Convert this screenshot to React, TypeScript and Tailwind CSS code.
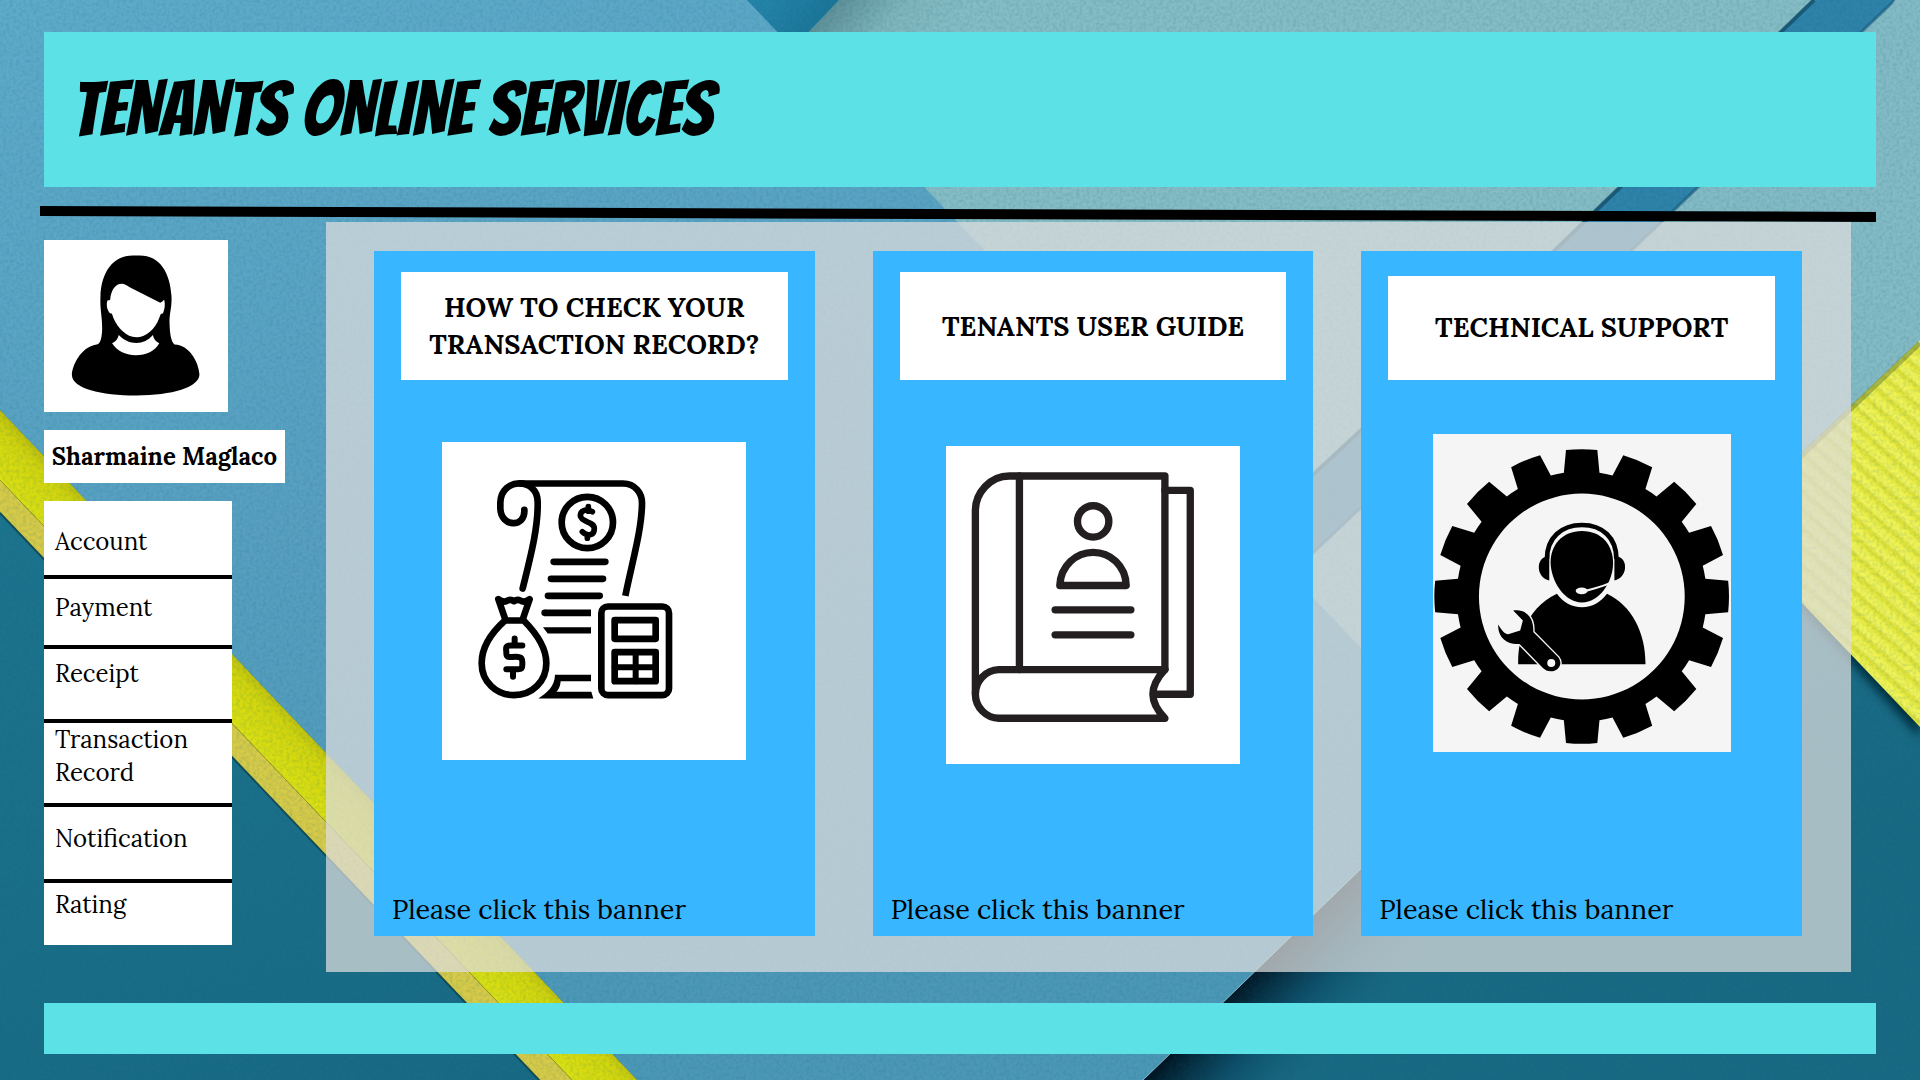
import React from "react";

const serif = "font-['Lora','Liberation_Serif',serif]";

function Backdrop() {
  return (
    <svg
      className="absolute inset-0 h-full w-full"
      viewBox="0 0 1920 1080"
      preserveAspectRatio="none"
      aria-hidden="true"
    >
      <defs>
        <linearGradient id="paper" x1="0" y1="0" x2="0.3" y2="1">
          <stop offset="0" stopColor="#5eaac9" />
          <stop offset="0.5" stopColor="#589fc0" />
          <stop offset="1" stopColor="#4c97b6" />
        </linearGradient>
        <linearGradient id="teal" x1="0" y1="0" x2="0.4" y2="1">
          <stop offset="0" stopColor="#207b94" />
          <stop offset="1" stopColor="#196983" />
        </linearGradient>
        <linearGradient id="yellow" gradientUnits="userSpaceOnUse" x1="200" y1="692" x2="249" y2="645">
          <stop offset="0" stopColor="#dbe013" />
          <stop offset="0.55" stopColor="#d2d50c" />
          <stop offset="1" stopColor="#a8a410" />
        </linearGradient>
        <linearGradient id="shade" gradientUnits="userSpaceOnUse" x1="1180" y1="1043" x2="1270" y2="1130">
          <stop offset="0" stopColor="#01121f" />
          <stop offset="0.45" stopColor="#0b4660" stopOpacity="0.75" />
          <stop offset="1" stopColor="#1b6b84" stopOpacity="0" />
        </linearGradient>
        <linearGradient id="wedge" gradientUnits="userSpaceOnUse" x1="770" y1="0" x2="850" y2="60">
          <stop offset="0" stopColor="#2583a8" />
          <stop offset="1" stopColor="#12698c" />
        </linearGradient>
        <linearGradient id="mist" gradientUnits="userSpaceOnUse" x1="824" y1="16" x2="900" y2="86">
          <stop offset="0" stopColor="#5f9098" />
          <stop offset="0.5" stopColor="#7fb4bb" />
          <stop offset="1" stopColor="#86bcc4" />
        </linearGradient>
        <linearGradient id="ridge" x1="0" y1="0" x2="0" y2="1">
          <stop offset="0" stopColor="#dcdf33" />
          <stop offset="0.35" stopColor="#eff24c" />
          <stop offset="0.75" stopColor="#f0f35c" />
          <stop offset="1" stopColor="#dcdf33" />
        </linearGradient>
        <pattern id="ridges" width="14" height="14" patternUnits="userSpaceOnUse" patternTransform="rotate(41)">
          <rect width="14" height="14" fill="url(#ridge)" />
        </pattern>
        <filter id="soft" x="-10%" y="-10%" width="120%" height="120%">
          <feGaussianBlur stdDeviation="5" />
        </filter>
        <filter id="grain" x="0" y="0" width="100%" height="100%">
          <feTurbulence type="fractalNoise" baseFrequency="0.3" numOctaves="2" seed="4" />
          <feColorMatrix values="0 0 0 0 0  0 0 0 0 0.12  0 0 0 0 0.2  0.9 0 0 0 -0.34" />
        </filter>
      </defs>
      <rect width="1920" height="1080" fill="url(#teal)" />
      <polygon points="1480,750 1920,750 1920,1080 1143,1080" fill="url(#shade)" />
      <polygon points="747,0 1895,0 1300,620" fill="#2f82a9" />
      <polygon points="747,0 839,0 793,48" fill="url(#wedge)" />
      <polygon points="839,0 1812,0 1552,251 1200,578 780,62" fill="url(#mist)" />
      <polyline points="1814,0 1554,251 1235,547" fill="none" stroke="#0e3e55" strokeWidth="4" opacity="0.6" />
      <polygon points="1895,0 1920,0 1920,340 1500,740 1250,613" fill="#84bac4" />
      <polyline points="1895,0 1250,613" fill="none" stroke="#17577a" strokeWidth="3" opacity="0.6" />
      <polygon points="1920,350 1733,524 1733,534 1920,738" fill="#062f3d" filter="url(#soft)" />
      <polygon points="1895,0 1920,0 1920,340 1680,568 1500,640" fill="#84bac4" />
      <polygon points="1920,340 1727,524 1920,727" fill="url(#ridges)" />
      <polyline points="1920,343 1727,527" fill="none" stroke="#6e7d2c" strokeWidth="5" opacity="0.5" />
      <polygon points="0,0 747,0 1470,763 1143,1080 637,1080 0,410" fill="url(#paper)" />
      <polyline points="1470,763 1143,1080" fill="none" stroke="#8dbfd2" strokeWidth="1" />
      <polygon points="0,410 637,1080 572,1080 0,480" fill="url(#yellow)" />
      <polygon points="0,480 572,1080 540,1080 0,512" fill="#d6ca48" />
      <polyline points="0,480 572,1080" fill="none" stroke="#9d9a1c" strokeWidth="1" />
      <polyline points="0,513 540,1081" fill="none" stroke="#0c3c40" strokeWidth="2" opacity="0.7" />
      <rect width="1920" height="1080" filter="url(#grain)" opacity="0.35" />
    </svg>
  );
}

function WomanIcon() {
  return (
    <svg className="h-full w-full" viewBox="40 120 554 516" aria-hidden="true">
      <path
        d="M318 166C250 160 212 214 210 290C208 330 216 350 215 392C213 420 209 431 198 434C150 441 124 500 124 526C126 566 210 587 318 587C426 587 508 562 508 524C506 490 480 436 433 434C424 425 419 408 418 370C417 340 425 325 424 290C420 214 386 160 318 166Z"
        fill="#000"
      />
      <path
        d="M239 300C242 268 256 250 276 251C284 252 290 257 298 261L390 308C396 307 399 300 402 300C406 316 402 332 398 340C390 340 390 346 387 354C374 390 346 412 318 412C288 412 262 384 249 354C246 344 244 338 239 340C229 330 227 312 231 301Z"
        fill="#fff"
      />
      <path
        d="M265 405C283 422 298 429 318 429C338 429 354 421 368 405C370 417 376 424 387 430C374 454 348 466 316 466C284 466 259 452 245 430C256 425 263 416 265 405Z"
        fill="#fff"
      />
    </svg>
  );
}

function RecordIcon() {
  return (
    <svg className="h-full w-full" viewBox="5 6 912 951" fill="none" stroke="#000" strokeWidth="20" strokeLinecap="round" strokeLinejoin="round" aria-hidden="true">
      <path d="M252 208C256 262 182 262 180 204V186C182 110 292 110 292 184C294 262 270 350 247 444" />
      <path d="M236 129H548C584 129 606 158 605 190C604 270 574 370 555 466" strokeLinecap="butt" />
      <circle cx="441" cy="246" r="77" />
      <path d="M456 214C440 202 420 210 420 226C422 246 462 242 462 264C462 286 440 288 426 274M444 198V212M441 284V293" strokeWidth="17" />
      <path d="M340 364H495M332 415H488M323 466H478" />
      <path d="M313 517H452" strokeLinecap="butt" />
      <circle cx="313" cy="517" r="10" fill="#000" stroke="none" />
      <path d="M308 560H452V579H322Z M344 703H452V722H361C360 738 354 748 348 754H453L459 774H294C320 756 343 740 344 703Z" fill="#000" stroke="none" />
      <path d="M194 540C156 574 124 620 124 668C124 724 168 764 221 764C276 764 318 722 318 668C318 622 284 574 250 540Z" />
      <path d="M194 534L174 476Q190 488 202 480Q212 476 221 482Q230 476 240 480Q252 488 268 476L248 534" />
      <path d="M246 615H212C192 615 198 625 198 637C198 653 204 649 226 649C248 649 246 658 246 670C246 688 242 686 228 686H198M223 594V612M218 690V709" strokeWidth="18" />
      <rect x="483" y="498" width="203" height="266" rx="20" />
      <rect x="523" y="539" width="123" height="56" />
      <rect x="523" y="635" width="123" height="87" />
      <path d="M586 635V722M523 680H646" strokeWidth="18" />
    </svg>
  );
}

function BookIcon() {
  return (
    <svg className="h-full w-full" viewBox="18 20 881 953" fill="none" stroke="#231f20" strokeWidth="22" strokeLinecap="round" strokeLinejoin="round" aria-hidden="true">
      <path d="M674 690V110H208C150 110 106 160 106 214V760" />
      <path d="M238 110V690" />
      <path d="M674 690H176C136 692 106 724 106 764C106 804 140 836 176 836H674C626 786 626 742 674 690Z" />
      <path d="M674 153H750V764H640" />
      <circle cx="459" cy="246" r="47" />
      <path d="M359 438C362 378 408 339 459 339C510 339 556 378 558 438Z" />
      <path d="M345 511H572M345 586H572" />
    </svg>
  );
}

function gearPath(cx: number, cy: number) {
  const point = (radius: number, degrees: number) => {
    const a = (degrees * Math.PI) / 180;
    return `${(cx + radius * Math.sin(a)).toFixed(1)} ${(cy - radius * Math.cos(a)).toFixed(1)}`;
  };
  let d = "";
  for (let i = 0; i < 16; i++) {
    const t = i * 22.5;
    d += `${i ? "L" : "M"}${point(374, t - 8.2)}L${point(441, t - 6.1)}A443 443 0 0 1 ${point(441, t + 6.1)}L${point(374, t + 8.2)}A374 374 0 0 1 ${point(374, t + 14.3)}`;
  }
  return `${d}ZM${cx} ${cy - 308}a308 308 0 1 0 1 0Z`;
}

function SupportIcon() {
  return (
    <svg className="h-full w-full" viewBox="9 14 892 951" aria-hidden="true">
      <path d={gearPath(454, 500)} fillRule="evenodd" />
      <path d="M264 703C262 610 300 530 380 492C398 518 424 532 455 532C486 532 510 518 530 492C606 528 646 612 645 703Z" />
      <path d="M361 400C360 346 396 304 455 304C514 304 548 346 548 400C548 458 506 518 455 518C404 518 363 458 361 400Z" />
      <path d="M350 388C350 324 394 286 455 286C516 286 558 324 558 388" fill="none" stroke="#000" strokeWidth="14" />
      <path d="M357 376V452C318 444 318 390 344 382ZM552 376V452C592 444 592 390 566 382Z" />
      <path d="M552 454C526 468 500 474 462 484" fill="none" stroke="#f5f5f5" strokeWidth="6" />
      <ellipse cx="454" cy="483" rx="18" ry="10" fill="#f5f5f5" />
      <path
        d="M249 542C284 536 312 560 309 606L384 682C400 704 382 724 362 724C352 724 344 720 338 714L268 642C236 646 202 626 204 584C214 600 222 612 234 613L270 602L278 572Z"
        stroke="#f5f5f5"
        strokeWidth="8"
        paintOrder="stroke"
      />
      <circle cx="363" cy="699" r="12" fill="#f5f5f5" />
    </svg>
  );
}

const menu = [
  { label: "Account", box: "h-[78px] pt-6 border-b-4" },
  { label: "Payment", box: "h-[70px] pt-3 border-b-4" },
  { label: "Receipt", box: "h-[74px] pt-2 border-b-4" },
  { label: "Transaction Record", box: "h-[84px] border-b-4" },
  { label: "Notification", box: "h-[76px] pt-[15px] border-b-4" },
  { label: "Rating", box: "h-[62px] pt-[5px]" },
];

const cards = [
  {
    title: "HOW TO CHECK YOUR TRANSACTION RECORD?",
    card: "pt-[21px] mr-[10px]",
    heading: "h-[108px]",
    picture: "mt-[62px] w-[304px] h-[318px] bg-white",
    icon: <RecordIcon />,
  },
  {
    title: "TENANTS USER GUIDE",
    card: "pt-[21px]",
    heading: "h-[108px]",
    picture: "mt-[66px] w-[294px] h-[318px] bg-white",
    icon: <BookIcon />,
  },
  {
    title: "TECHNICAL SUPPORT",
    card: "pt-[25px]",
    heading: "h-[104px] pb-[2px]",
    picture: "mt-[54px] w-[298px] h-[318px] bg-[#f5f5f5]",
    icon: <SupportIcon />,
  },
];

export default function App() {
  return (
    <div className={`relative isolate flex min-h-screen flex-col overflow-hidden px-[44px] pt-8 pb-[26px] text-black ${serif}`}>
      <div className="absolute inset-0 -z-10">
        <Backdrop />
      </div>

      <header className="flex h-[155px] items-center bg-[#5ce1e6] px-7">
        <h1 className="font-['Bangers','Liberation_Sans_Narrow','Liberation_Sans',sans-serif] text-[76px] leading-none font-normal whitespace-nowrap">
          TENANTS ONLINE SERVICES
        </h1>
      </header>

      <div className="mt-[22px] -ml-1 h-[10px] rotate-[0.18deg] bg-black" />

      <div className="mt-[3px] flex flex-1 items-stretch gap-[41px] pr-[25px]">
        <aside className="flex w-[241px] shrink-0 flex-col items-start gap-[18px] pt-[18px]">
          <div className="h-[172px] w-[184px] bg-white">
            <WomanIcon />
          </div>
          <p className="flex h-[53px] w-full items-center justify-center bg-white text-[24px] font-bold whitespace-nowrap">
            Sharmaine Maglaco
          </p>
          <nav className="w-[188px] bg-white">
            <ul>
              {menu.map((item) => (
                <li key={item.label} className={`border-black ${item.box}`}>
                  <a href="#" className="block px-[11px] text-[24px] leading-[33px]">
                    {item.label}
                  </a>
                </li>
              ))}
            </ul>
          </nav>
        </aside>

        <main className="flex flex-1 gap-12 bg-[#dddddd]/73 pt-[29px] pr-[49px] pb-9 pl-12">
          {cards.map((c) => (
            <a key={c.title} href="#" className={`flex flex-1 flex-col items-center bg-[#38b6ff] px-[27px] pb-2 ${c.card}`}>
              <h2 className={`flex w-full items-center justify-center bg-white px-4 text-center text-[27px] leading-[37px] font-bold ${c.heading}`}>
                {c.title}
              </h2>
              <div className={c.picture}>{c.icon}</div>
              <p className="mt-auto -ml-[9px] self-start text-[27px] leading-[37px]">Please click this banner</p>
            </a>
          ))}
        </main>
      </div>

      <footer className="mt-[31px] h-[51px] bg-[#5ce1e6]" />
    </div>
  );
}
